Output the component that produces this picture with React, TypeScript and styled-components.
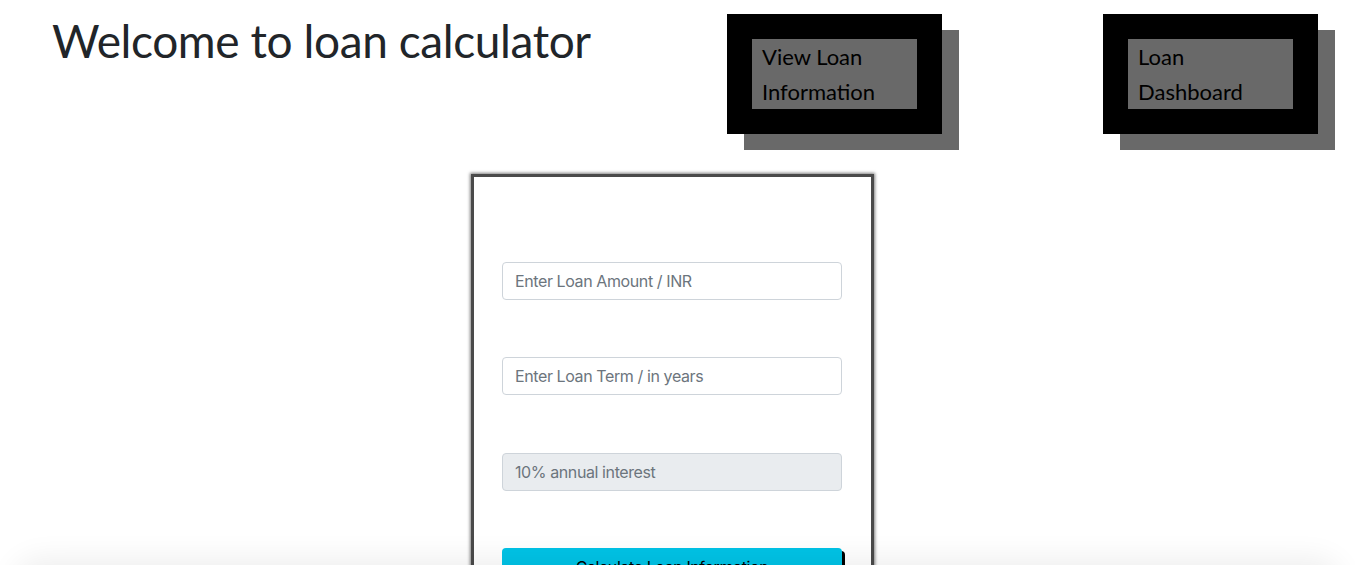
import React from "react";
import styled, { createGlobalStyle } from "styled-components";

const Global = createGlobalStyle`
  html, body { margin: 0; padding: 0; background: #fff; }
  body { font-family: Inter, "Noto Sans", sans-serif; color: #212529; overflow: hidden; }
  * { box-sizing: border-box; }
`;

const Page = styled.div`
  width: 1355px;
  min-height: 565px;
`;

const Header = styled.header`
  display: grid;
  grid-template-columns: 727px 376px 1fr;
  align-items: start;
  padding-top: 14px;
`;

const Title = styled.h1`
  margin: -1px 0 0 52px;
  font-family: Lato, "Noto Sans", sans-serif;
  font-weight: 400;
  font-size: 46px;
  line-height: 1.2;
  letter-spacing: -0.4px;
  color: #212529;
  white-space: nowrap;
`;

const NavButton = styled.a`
  display: block;
  width: 215px;
  border: 25px solid #000;
  background: #696969;
  padding: 0 10px;
  font-family: Lato, "Noto Sans", sans-serif;
  font-size: 22px;
  line-height: 35px;
  color: #000;
  text-decoration: none;
  box-shadow: 17px 16px 0 #696969;
  cursor: pointer;
`;

const Card = styled.form`
  width: 403px;
  margin: 40px 0 0 471px;
  padding: 85px 28px 40px;
  border: 3px solid #4a4a4a;
  box-shadow: 0 0 3px 1px rgba(0, 0, 0, 0.5);
  display: flex;
  flex-direction: column;
  gap: 57.4px;
  min-height: 420px;
`;

const Input = styled.input<{ $disabled?: boolean }>`
  display: block;
  width: 340px;
  height: 38px;
  padding: 6px 12px;
  border: 1px solid #ced4da;
  border-radius: 4px;
  background: ${(p) => (p.$disabled ? "#e9ecef" : "#fff")};
  font-family: Inter, "Noto Sans", sans-serif;
  font-size: 16px;
  letter-spacing: -0.4px;
  color: #495057;
  &::placeholder { color: #6c757d; opacity: 1; }
`;

const Submit = styled.button`
  width: 340px;
  height: 38px;
  border: none;
  border-radius: 4px;
  background: #00c3e6;
  color: #000;
  font-family: Inter, "Noto Sans", sans-serif;
  font-size: 16px;
  letter-spacing: -0.4px;
  box-shadow: 3px 3px 0 #000;
  cursor: pointer;
`;

const BottomFade = styled.div`
  position: fixed;
  left: 20px;
  right: 20px;
  bottom: -40px;
  height: 40px;
  border-radius: 40px;
  box-shadow: 0 0 30px 6px rgba(0, 0, 0, 0.07);
  pointer-events: none;
`;

export default function App() {
  return (
    <Page>
      <Global />
      <Header>
        <Title>Welcome to loan calculator</Title>
        <NavButton>View Loan Information</NavButton>
        <NavButton>Loan Dashboard</NavButton>
      </Header>
      <Card onSubmit={(e) => e.preventDefault()}>
        <Input placeholder="Enter Loan Amount / INR" />
        <Input placeholder="Enter Loan Term / in years" />
        <Input $disabled disabled placeholder="10% annual interest" />
        <Submit type="submit">Calculate Loan Information</Submit>
      </Card>
      <BottomFade />
    </Page>
  );
}
